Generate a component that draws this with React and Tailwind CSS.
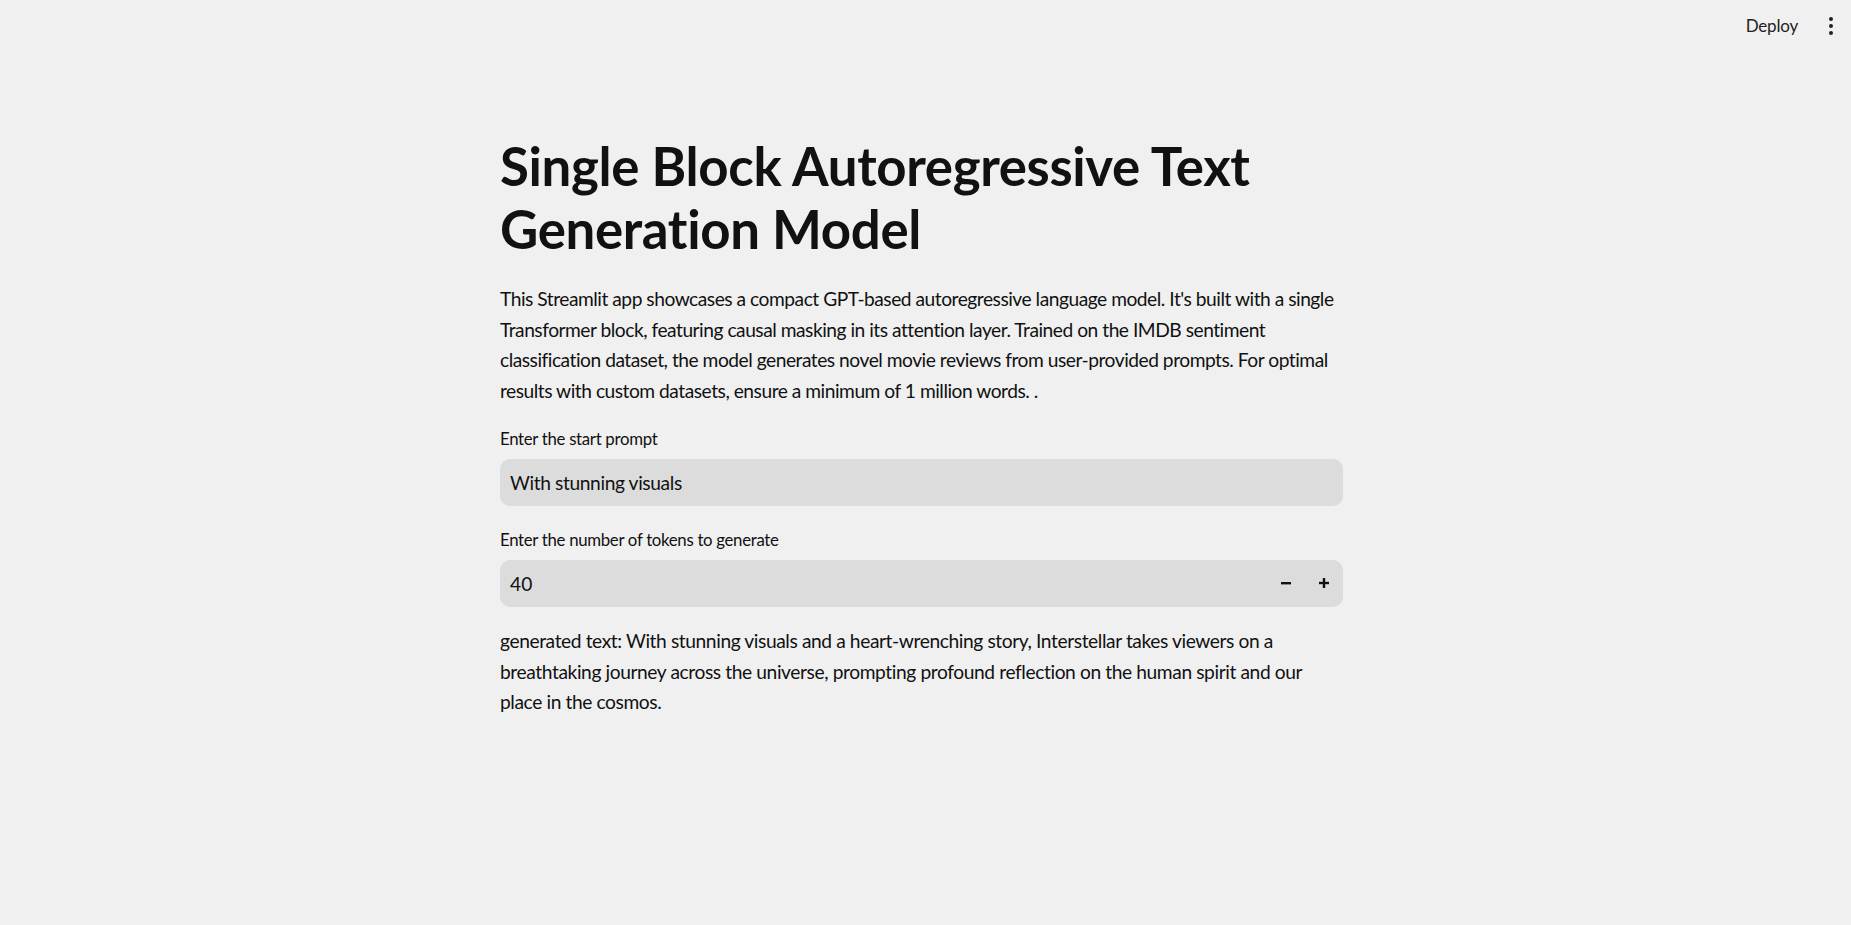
import { useState } from "react";

export default function App() {
  const [prompt, setPrompt] = useState("With stunning visuals");
  const [tokens, setTokens] = useState(40);

  return (
    <div className="min-h-[925px] bg-[#f0f0f0] text-[#111111] font-['Lato',sans-serif]">
      {/* header */}
      <header className="flex h-[52px] items-center justify-end pr-[18px]">
        <button className="mr-[31px] text-[17px] tracking-[-0.2px] text-[#222]">Deploy</button>
        <button className="flex flex-col gap-[3px]" aria-label="menu">
          <span className="h-[4px] w-[4px] rounded-full bg-[#222]" />
          <span className="h-[4px] w-[4px] rounded-full bg-[#222]" />
          <span className="h-[4px] w-[4px] rounded-full bg-[#222]" />
        </button>
      </header>

      <main className="flex justify-center pr-[8px]">
        <div className="w-[843px] pt-[82px]">
          <h1 className="text-[52.8px] font-bold leading-[63px] tracking-[-0.35px]">
            Single Block Autoregressive Text Generation Model
          </h1>

          <p className="mt-[24px] text-[19.2px] leading-[30.7px] tracking-[-0.48px]">
            This Streamlit app showcases a compact GPT-based autoregressive language model. It's built with a single
            Transformer block, featuring causal masking in its attention layer. Trained on the IMDB sentiment
            classification dataset, the model generates novel movie reviews from user-provided prompts. For optimal
            results with custom datasets, ensure a minimum of 1 million words. .
          </p>

          <label className="mt-[20px] block text-[16.8px] leading-[24px] tracking-[-0.3px]">Enter the start prompt</label>
          <input
            className="mt-[8px] h-[47px] w-full rounded-[10px] bg-[#dcdcdc] px-[10px] text-[19.2px] tracking-[-0.38px] outline-none"
            value={prompt}
            onChange={(e) => setPrompt(e.target.value)}
          />

          <label className="mt-[22px] block text-[16.8px] leading-[24px] tracking-[-0.3px]">Enter the number of tokens to generate</label>
          <div className="mt-[8px] flex h-[47px] w-full items-center rounded-[10px] bg-[#dcdcdc]">
            <input
              className="h-full flex-1 bg-transparent px-[10px] text-[19.2px] outline-none"
              value={tokens}
              onChange={(e) => setTokens(e.target.value)}
            />
            <button className="flex h-full w-[38px] items-center justify-center" onClick={() => setTokens(Number(tokens) - 1)}>
              <svg width="12" height="12" viewBox="0 0 12 12"><rect x="1" y="5" width="10" height="2.4" fill="#111" /></svg>
            </button>
            <button className="flex h-full w-[38px] items-center justify-center" onClick={() => setTokens(Number(tokens) + 1)}>
              <svg width="12" height="12" viewBox="0 0 12 12"><rect x="1" y="4.8" width="10" height="2.4" fill="#111" /><rect x="4.8" y="1" width="2.4" height="10" fill="#111" /></svg>
            </button>
          </div>

          <p className="mt-[19px] text-[19.2px] leading-[30.7px] tracking-[-0.4px]">
            generated text: With stunning visuals and a heart-wrenching story, Interstellar takes viewers on a
            breathtaking journey across the universe, prompting profound reflection on the human spirit and our
            place in the cosmos.
          </p>
        </div>
      </main>
    </div>
  );
}
